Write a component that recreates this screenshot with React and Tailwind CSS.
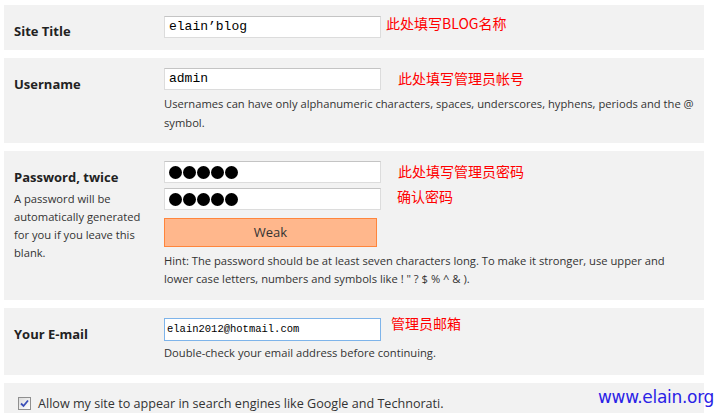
import React from "react";

const sans = "font-['Segoe_UI','Open_Sans','Noto_Sans',sans-serif]";
const cjk = "font-['Noto_Sans_CJK_SC',sans-serif]";

const Field = ({ value, className = "" }) => (
  <div
    className={`w-[217px] h-[22px] bg-white border flex items-center text-black font-['Liberation_Mono',monospace] ${className}`}
  >
    {value}
  </div>
);

const Note = ({ children, className = "" }) => (
  <span className={`${cjk} text-[14px] leading-[18px] text-[#ff0000] ${className}`}>
    {children}
  </span>
);

const Dots = () => (
  <div className="flex gap-[1px]">
    {[0, 1, 2, 3, 4].map((i) => (
      <span key={i} className="w-[13px] h-[13px] rounded-full bg-black" />
    ))}
  </div>
);

const Panel = ({ label, desc, children, className = "" }) => (
  <div className={`flex bg-[#f2f2f2] ${className}`}>
    <div className="w-[160px] shrink-0 pl-[10px] pr-[16px] pt-[17px]">
      <div className="text-[13px] font-bold text-[#222] leading-[18px]">{label}</div>
      {desc && (
        <p className="mt-[4px] text-[11.2px] leading-[18px] text-[#333]">{desc}</p>
      )}
    </div>
    <div className="flex-1">{children}</div>
  </div>
);

const plain = "text-[13px] px-[4px] border-[#dcdcdc] border-t-[#c4c4c4]";

export default function App() {
  return (
    <div className={`relative w-[721px] h-[413px] overflow-hidden bg-white ${sans}`}>
      <div className="flex flex-col gap-[8px] pt-[5px] pl-[4px] w-[704px]">
        <Panel label="Site Title" className="h-[45px]">
          <div className="flex items-start pt-[11px]">
            <Field value="elain’blog" className={plain} />
            <Note className="ml-[5px] -mt-[2px]">此处填写BLOG名称</Note>
          </div>
        </Panel>
        <Panel label="Username" className="h-[85px]">
          <div className="pt-[10px]">
            <div className="flex items-start">
              <Field value="admin" className={plain} />
              <Note className="ml-[17px] mt-[1px]">此处填写管理员帐号</Note>
            </div>
            <p className="mt-[4px] text-[11.2px] leading-[19px] text-[#333]">
              Usernames can have only alphanumeric characters, spaces, underscores, hyphens, periods and the @ symbol.
            </p>
          </div>
        </Panel>
        <Panel
          label="Password, twice"
          desc="A password will be automatically generated for you if you leave this blank."
          className="h-[149px]"
        >
          <div className="pt-[10px]">
            <div className="flex items-start">
              <Field value={<Dots />} className={plain} />
              <Note className="ml-[17px] mt-[1px]">此处填写管理员密码</Note>
            </div>
            <div className="flex items-start mt-[5px]">
              <Field value={<Dots />} className={plain} />
              <Note className="ml-[16px] -mt-[1px]">确认密码</Note>
            </div>
            <div className="mt-[8px] w-[213px] h-[29px] bg-[#ffb78c] border border-[#ff853c] flex items-center justify-center text-[13px] text-[#333]">
              Weak
            </div>
            <p className="mt-[5px] text-[11.2px] leading-[18px] text-[#333] pr-[24px]">
              Hint: The password should be at least seven characters long. To make it stronger, use upper and lower case letters, numbers and symbols like ! " ? $ % ^ &amp; ).
            </p>
          </div>
        </Panel>
        <Panel label="Your E-mail" className="h-[67px]">
          <div className="pt-[10px]">
            <div className="flex items-start">
              <Field
                value="elain2012@hotmail.com"
                className="text-[10.5px] h-[23px] px-[2px] border-[#7eb4ea]"
              />
              <Note className="ml-[10px] -mt-[4px]">管理员邮箱</Note>
            </div>
            <p className="mt-[3px] text-[11.2px] leading-[18px] text-[#333]">
              Double-check your email address before continuing.
            </p>
          </div>
        </Panel>
        <div className="bg-[#f2f2f2] h-[40px] flex items-start pt-[13px] pl-[14px]">
          <span className="w-[13px] h-[13px] border border-[#8f8f8f] bg-gradient-to-br from-[#dcdcdc] to-white flex items-center justify-center mt-[1px]">
            <svg width="9" height="9" viewBox="0 0 9 9">
              <path d="M1 4.5 L3.5 7 L8 1.5" fill="none" stroke="#3b4fb8" strokeWidth="1.8" />
            </svg>
          </span>
          <span className="ml-[7px] text-[12.6px] leading-[16px] text-[#333]">
            Allow my site to appear in search engines like Google and Technorati.
          </span>
        </div>
      </div>
      <div className="absolute left-[598px] top-[386px] text-[17px] leading-[22px] text-[#2a22e6] font-['DejaVu_Sans',sans-serif] tracking-[-0.3px]">
        www.elain.org
      </div>
    </div>
  );
}
